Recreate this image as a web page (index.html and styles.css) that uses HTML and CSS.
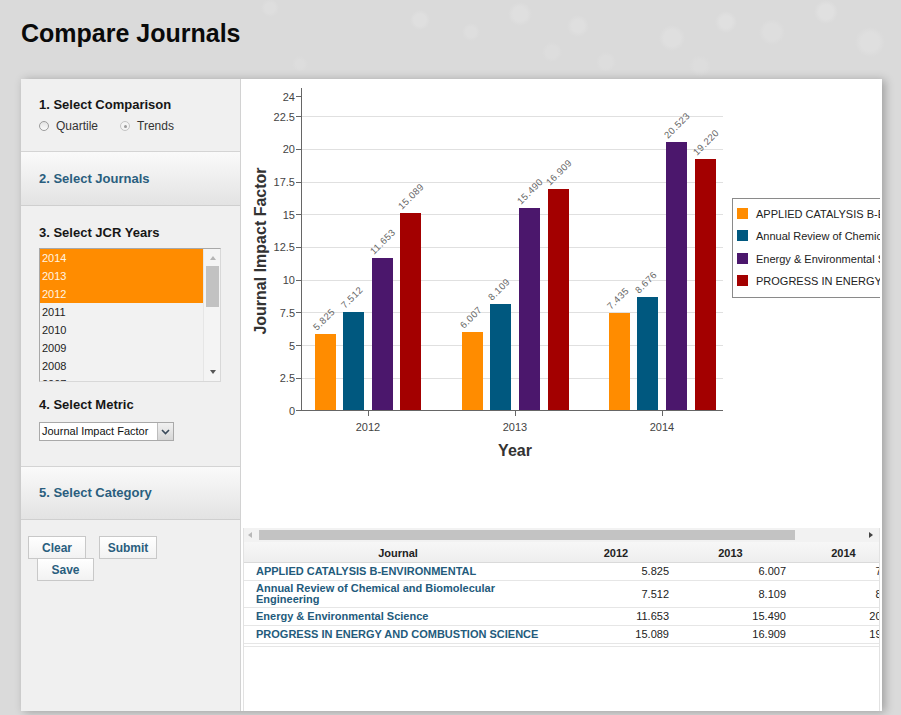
FILE: index.html
```html
<!DOCTYPE html>
<html lang="en">
<head>
<meta charset="utf-8">
<title>Compare Journals</title>
<link rel="stylesheet" href="styles.css">
</head>
<body>
<div class="page">
  <header class="page-header"><h1>Compare Journals</h1></header>
  <div class="main">
    <aside class="sidebar">
      <section class="sec sec-comparison">
        <h2 class="step">1. Select Comparison</h2>
        <div class="radios">
          <label class="radio"><span class="radio-dot"></span>Quartile</label>
          <label class="radio"><span class="radio-dot checked"></span>Trends</label>
        </div>
      </section>
      <section class="sec acc"><h2 class="step link">2. Select Journals</h2></section>
      <section class="sec sec-years">
        <h2 class="step">3. Select JCR Years</h2>
        <div class="listbox">
          <ul class="list-items">
            <li class="sel">2014</li>
            <li class="sel">2013</li>
            <li class="sel">2012</li>
            <li>2011</li>
            <li>2010</li>
            <li>2009</li>
            <li>2008</li>
            <li>2007</li>
          </ul>
          <div class="vscroll">
            <span class="arr up"></span>
            <span class="vthumb"></span>
            <span class="arr down"></span>
          </div>
        </div>
        <h2 class="step metric-title">4. Select Metric</h2>
        <div class="select">
          <span class="select-text">Journal Impact Factor</span>
          <span class="select-btn"><svg width="9" height="6" viewBox="0 0 9 6"><path d="M1 1 L4.5 4.5 L8 1" fill="none" stroke="#3a4a5a" stroke-width="1.6"/></svg></span>
        </div>
      </section>
      <section class="sec acc acc5"><h2 class="step link">5. Select Category</h2></section>
      <div class="actions">
        <div class="btn-row"><button class="btn">Clear</button><button class="btn">Submit</button></div>
        <div class="btn-row second"><button class="btn">Save</button></div>
      </div>
    </aside>
    <main class="content">
      <svg class="chart" width="639" height="449" viewBox="0 0 639 449">
        <g transform="translate(-241,-79)" font-family="Liberation Sans, Arial, sans-serif">
          <g stroke="#e0e0e0" stroke-width="1">
            <line x1="302" y1="378.5" x2="723" y2="378.5"/>
            <line x1="302" y1="345.5" x2="723" y2="345.5"/>
            <line x1="302" y1="312.5" x2="723" y2="312.5"/>
            <line x1="302" y1="280.5" x2="723" y2="280.5"/>
            <line x1="302" y1="247.5" x2="723" y2="247.5"/>
            <line x1="302" y1="214.5" x2="723" y2="214.5"/>
            <line x1="302" y1="182.5" x2="723" y2="182.5"/>
            <line x1="302" y1="149.5" x2="723" y2="149.5"/>
            <line x1="302" y1="116.5" x2="723" y2="116.5"/>
          </g>
          <g stroke="#666" stroke-width="1">
            <line x1="301.5" y1="88" x2="301.5" y2="411"/>
            <line x1="301" y1="410.5" x2="723" y2="410.5"/>
            <line x1="296" y1="410.5" x2="302" y2="410.5"/>
            <line x1="296" y1="378.5" x2="302" y2="378.5"/>
            <line x1="296" y1="345.5" x2="302" y2="345.5"/>
            <line x1="296" y1="312.5" x2="302" y2="312.5"/>
            <line x1="296" y1="280.5" x2="302" y2="280.5"/>
            <line x1="296" y1="247.5" x2="302" y2="247.5"/>
            <line x1="296" y1="214.5" x2="302" y2="214.5"/>
            <line x1="296" y1="182.5" x2="302" y2="182.5"/>
            <line x1="296" y1="149.5" x2="302" y2="149.5"/>
            <line x1="296" y1="116.5" x2="302" y2="116.5"/>
            <line x1="296" y1="96.5" x2="302" y2="96.5"/>
            <line x1="368.5" y1="411" x2="368.5" y2="416"/>
            <line x1="515.5" y1="411" x2="515.5" y2="416"/>
            <line x1="662.5" y1="411" x2="662.5" y2="416"/>
          </g>
          <g font-size="11" fill="#444" text-anchor="end">
            <text x="295" y="414.5">0</text>
            <text x="295" y="382">2.5</text>
            <text x="295" y="349.5">5</text>
            <text x="295" y="316.5">7.5</text>
            <text x="295" y="284">10</text>
            <text x="295" y="251">12.5</text>
            <text x="295" y="218.5">15</text>
            <text x="295" y="186">17.5</text>
            <text x="295" y="153">20</text>
            <text x="295" y="120.5">22.5</text>
            <text x="295" y="100.5">24</text>
          </g>
          <g font-size="11" fill="#444" text-anchor="middle">
            <text x="368" y="431">2012</text>
            <text x="515" y="431">2013</text>
            <text x="662" y="431">2014</text>
          </g>
          <text x="515" y="456" font-size="16" font-weight="bold" fill="#333" text-anchor="middle">Year</text>
          <text transform="translate(266,251) rotate(-90)" font-size="16" font-weight="bold" fill="#333" text-anchor="middle">Journal Impact Factor</text>

          <g>
            <rect x="315" y="334" width="21" height="76" fill="#ff8c00"/>
            <rect x="343" y="312" width="21" height="98" fill="#00587f"/>
            <rect x="372" y="258" width="21" height="152" fill="#4b176c"/>
            <rect x="400" y="213" width="21" height="197" fill="#a30000"/>
            <rect x="462" y="332" width="21" height="78" fill="#ff8c00"/>
            <rect x="490" y="304" width="21" height="106" fill="#00587f"/>
            <rect x="519" y="208" width="21" height="202" fill="#4b176c"/>
            <rect x="548" y="189" width="21" height="221" fill="#a30000"/>
            <rect x="609" y="313" width="21" height="97" fill="#ff8c00"/>
            <rect x="637" y="297" width="21" height="113" fill="#00587f"/>
            <rect x="666" y="142" width="21" height="268" fill="#4b176c"/>
            <rect x="695" y="159" width="21" height="251" fill="#a30000"/>
          </g>
          <g font-size="9.5" fill="#666" letter-spacing="0.5">
            <text transform="translate(317,331) rotate(-45)">5.825</text>
            <text transform="translate(345,309) rotate(-45)">7.512</text>
            <text transform="translate(374,255) rotate(-45)">11.653</text>
            <text transform="translate(402,210) rotate(-45)">15.089</text>
            <text transform="translate(464,329) rotate(-45)">6.007</text>
            <text transform="translate(492,301) rotate(-45)">8.109</text>
            <text transform="translate(521,205) rotate(-45)">15.490</text>
            <text transform="translate(550,186) rotate(-45)">16.909</text>
            <text transform="translate(611,310) rotate(-45)">7.435</text>
            <text transform="translate(639,294) rotate(-45)">8.676</text>
            <text transform="translate(668,139) rotate(-45)">20.523</text>
            <text transform="translate(697,156) rotate(-45)">19.220</text>
          </g>

          <rect x="732.5" y="198.5" width="220" height="99" fill="#fff" stroke="#8a8a8a"/>
          <rect x="737" y="208" width="11" height="11" fill="#ff8c00"/>
          <rect x="737" y="230" width="11" height="11" fill="#00587f"/>
          <rect x="737" y="253" width="11" height="11" fill="#4b176c"/>
          <rect x="737" y="275" width="11" height="11" fill="#a30000"/>
          <g font-size="11" fill="#222">
            <text x="756" y="217.5">APPLIED CATALYSIS B-ENVIRONMENTAL</text>
            <text x="756" y="239.5">Annual Review of Chemical and Biomolecular Engineering</text>
            <text x="756" y="262.5">Energy &amp; Environmental Science</text>
            <text x="756" y="284.5">PROGRESS IN ENERGY AND COMBUSTION SCIENCE</text>
          </g>
        </g>
      </svg>
      <div class="grid-wrap">
        <div class="hscroll">
          <span class="harr left"></span>
          <span class="hthumb"></span>
          <span class="harr right"></span>
        </div>
        <div class="grid">
          <div class="grid-row grid-head">
            <div class="cell c-journal">Journal</div>
            <div class="cell c-year">2012</div>
            <div class="cell c-year">2013</div>
            <div class="cell c-year c-last">2014</div>
          </div>
          <div class="grid-row">
            <div class="cell c-journal"><a class="jlink">APPLIED CATALYSIS B-ENVIRONMENTAL</a></div>
            <div class="cell c-num">5.825</div>
            <div class="cell c-num">6.007</div>
            <div class="cell c-num">7.435</div>
          </div>
          <div class="grid-row">
            <div class="cell c-journal"><a class="jlink">Annual Review of Chemical and Biomolecular Engineering</a></div>
            <div class="cell c-num">7.512</div>
            <div class="cell c-num">8.109</div>
            <div class="cell c-num">8.676</div>
          </div>
          <div class="grid-row">
            <div class="cell c-journal"><a class="jlink">Energy &amp; Environmental Science</a></div>
            <div class="cell c-num">11.653</div>
            <div class="cell c-num">15.490</div>
            <div class="cell c-num">20.523</div>
          </div>
          <div class="grid-row">
            <div class="cell c-journal"><a class="jlink">PROGRESS IN ENERGY AND COMBUSTION SCIENCE</a></div>
            <div class="cell c-num">15.089</div>
            <div class="cell c-num">16.909</div>
            <div class="cell c-num">19.220</div>
          </div>
        </div>
        <div class="grid-foot"></div>
      </div>
    </main>
  </div>
</div>
</body>
</html>
```
FILE: styles.css
```css
* { box-sizing: border-box; }
html, body { margin: 0; padding: 0; }
body {
  font-family: "Liberation Sans", Arial, sans-serif;
  background: #dadada;
  color: #111;
}
.page {
  width: 901px;
  height: 715px;
  overflow: hidden;
  background-color: #dadada;
  background-image:
    radial-gradient(circle at 420px 20px, #dfdfdf 0 6px, rgba(218,218,218,0) 10px),
    radial-gradient(circle at 471px 32px, #dedede 0 5px, rgba(218,218,218,0) 9px),
    radial-gradient(circle at 520px 14px, #dfdfdf 0 7px, rgba(218,218,218,0) 12px),
    radial-gradient(circle at 552px 52px, #dddddd 0 6px, rgba(218,218,218,0) 10px),
    radial-gradient(circle at 578px 26px, #dfdfdf 0 6px, rgba(218,218,218,0) 11px),
    radial-gradient(circle at 606px 62px, #dddddd 0 6px, rgba(218,218,218,0) 10px),
    radial-gradient(circle at 672px 38px, #dfdfdf 0 8px, rgba(218,218,218,0) 13px),
    radial-gradient(circle at 700px 66px, #dddddd 0 6px, rgba(218,218,218,0) 11px),
    radial-gradient(circle at 726px 22px, #e0e0e0 0 6px, rgba(218,218,218,0) 11px),
    radial-gradient(circle at 772px 32px, #dedede 0 8px, rgba(218,218,218,0) 13px),
    radial-gradient(circle at 826px 12px, #e0e0e0 0 7px, rgba(218,218,218,0) 12px),
    radial-gradient(circle at 870px 42px, #dfdfdf 0 9px, rgba(218,218,218,0) 15px),
    radial-gradient(circle at 300px 64px, #dddddd 0 4px, rgba(218,218,218,0) 8px),
    radial-gradient(circle at 270px 8px, #dedede 0 5px, rgba(218,218,218,0) 9px);
}
.page-header {
  height: 79px;
  padding: 18px 0 0 21px;
}
.page-header h1 {
  margin: 0;
  font-size: 25px;
  line-height: 30px;
  font-weight: bold;
  color: #0a0a0a;
}

.main {
  margin-left: 21px;
  width: 861px;
  height: 632px;
  display: flex;
  background: #fff;
  box-shadow: 3px 1px 9px rgba(0, 0, 0, 0.28);
}

/* ---------- sidebar ---------- */
.sidebar {
  width: 220px;
  flex: none;
  background: #f0f0f0;
  border-right: 1px solid #d2d2d2;
}
.sec {
  border-bottom: 1px solid #d4d4d4;
  padding-left: 18px;
}
.step {
  margin: 0;
  font-size: 13px;
  line-height: 16px;
  font-weight: bold;
  color: #161616;
}
.step.link { color: #2a5e7e; }
.sec-comparison {
  height: 73px;
  padding-top: 18px;
}
.radios {
  display: flex;
  align-items: center;
  margin-top: 5px;
  height: 16px;
}
.radio {
  display: flex;
  align-items: center;
  font-size: 12px;
  color: #333;
}
.radio + .radio { margin-left: 22px; }
.radio-dot {
  width: 10px;
  height: 10px;
  border-radius: 50%;
  border: 1px solid #9c9c9c;
  background: linear-gradient(#e4e4e4, #fbfbfb);
  margin-right: 7px;
  position: relative;
}
.radio-dot.checked {
  border-color: #c4c4c4;
  background: #f4f4f4;
}
.radio-dot.checked::after {
  content: "";
  position: absolute;
  left: 2.5px;
  top: 2.5px;
  width: 3px;
  height: 3px;
  border-radius: 50%;
  background: #9a9a9a;
}
.acc {
  height: 54px;
  display: flex;
  align-items: center;
  background: linear-gradient(#fafafa, #e3e3e3);
  border-bottom-color: #cfcfcf;
}
.acc5 { height: 53px; }
.sec-years {
  height: 261px;
  padding-top: 19px;
}
.listbox {
  margin-top: 7px;
  width: 182px;
  height: 134px;
  display: flex;
  border: 1px solid #a8a8a8;
  border-right-color: #d8d8d8;
  border-bottom-color: #d8d8d8;
  background: #f2f2f2;
  overflow: hidden;
}
.list-items {
  list-style: none;
  margin: 0;
  padding: 0;
  width: 163px;
  flex: none;
}
.list-items li {
  height: 18px;
  line-height: 18px;
  padding-left: 2px;
  font-size: 11px;
  color: #222;
}
.list-items li.sel {
  background: #ff8c00;
  color: #fff4e2;
}
.vscroll {
  flex: 1;
  position: relative;
  background: #f4f4f4;
  border-left: 1px solid #e6e6e6;
}
.arr {
  position: absolute;
  left: 6px;
  width: 0;
  height: 0;
  border-left: 3.5px solid transparent;
  border-right: 3.5px solid transparent;
}
.arr.up { top: 7px; border-bottom: 4px solid #b5b5b5; }
.arr.down { bottom: 7px; border-top: 4px solid #555; }
.vthumb {
  position: absolute;
  left: 2px;
  top: 17px;
  width: 13px;
  height: 41px;
  background: #c2c2c2;
}
.metric-title { margin-top: 15px; }
.select {
  margin-top: 9px;
  width: 135px;
  height: 19px;
  display: flex;
  border: 1px solid #a9a9a9;
  background: #fff;
}
.select-text {
  flex: 1;
  font-size: 11px;
  line-height: 17px;
  padding-left: 2px;
  color: #111;
}
.select-btn {
  width: 16px;
  display: flex;
  align-items: center;
  justify-content: center;
  background: linear-gradient(#f1f1f1, #d6d6d6);
  border-left: 1px solid #bdbdbd;
}
.actions {
  padding: 16px 0 0 7px;
}
.btn-row { display: flex; }
.btn-row.second { padding-left: 9px; }
.btn {
  font-family: "Liberation Sans", Arial, sans-serif;
  font-size: 12px;
  font-weight: bold;
  color: #2a5e7e;
  background: linear-gradient(#ffffff, #f2f2f2);
  border: 1px solid #c8c8c8;
  height: 23px;
  padding: 0;
  margin: 0;
  width: 58px;
}
.btn-row .btn + .btn { margin-left: 13px; }
.btn-row.second .btn { width: 57px; margin-top: -1px; }

/* ---------- content ---------- */
.content {
  flex: 1;
  background: #fff;
  display: flex;
  flex-direction: column;
  overflow: hidden;
}
.chart { display: block; flex: none; }
.grid-wrap {
  flex: 1;
  margin: 0 2px 0 2px;
  border-left: 1px solid #e2e2e2;
  border-right: 1px solid #e2e2e2;
  overflow: hidden;
}
.hscroll {
  height: 14px;
  background: #f2f2f2;
  position: relative;
}
.harr {
  position: absolute;
  top: 4px;
  width: 0;
  height: 0;
  border-top: 3.5px solid transparent;
  border-bottom: 3.5px solid transparent;
}
.harr.left { left: 4px; border-right: 4px solid #b8b8b8; }
.harr.right { right: 6px; border-left: 4px solid #444; }
.hthumb {
  position: absolute;
  left: 15px;
  top: 2px;
  width: 536px;
  height: 10px;
  background: #c3c3c3;
}
.grid { width: 662px; }
.grid-row {
  display: grid;
  grid-template-columns: 316px 112px 117px 117px;
  border-bottom: 1px solid #e6e6e6;
}
.cell {
  min-height: 17px;
  padding: 2px 3px;
  line-height: 11px;
  font-size: 11px;
  display: flex;
  align-items: center;
}
.c-journal { padding-left: 12px; padding-right: 20px; }
.c-num { justify-content: flex-end; color: #222; }
.grid-head {
  background: linear-gradient(#f7f7f7, #eeeeee);
  border-bottom-color: #dadada;
}
.grid-head .cell {
  min-height: 20px;
  justify-content: center;
  font-weight: bold;
  color: #222;
  padding-top: 4px;
}
.grid-head .c-last { padding-right: 11px; }
.jlink {
  color: #235b7c;
  font-weight: bold;
  text-decoration: none;
}
.grid-foot {
  width: 662px;
  height: 3px;
  border-bottom: 1px solid #e6e6e6;
}
```
